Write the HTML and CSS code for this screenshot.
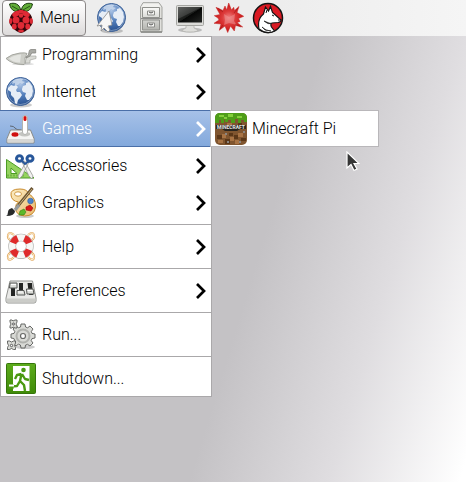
FILE: index.html
```html
<!DOCTYPE html>
<html lang="en">
<head>
<meta charset="utf-8">
<title>Desktop</title>
<link rel="stylesheet" href="styles.css">
</head>
<body>
<svg class="defs" aria-hidden="true">
  <defs>
    <radialGradient id="sea" cx=".5" cy=".25" r=".75"><stop offset="0" stop-color="#a9c2e4"/><stop offset=".5" stop-color="#5480bd"/><stop offset="1" stop-color="#264f8e"/></radialGradient>
    <linearGradient id="metal" x2="0" y2="1"><stop offset="0" stop-color="#fafaf8"/><stop offset="1" stop-color="#b4b5b0"/></linearGradient>
    <linearGradient id="screen" x2="1" y2="1"><stop offset="0" stop-color="#4a4c4a"/><stop offset=".5" stop-color="#191b19"/><stop offset=".52" stop-color="#050605"/><stop offset="1" stop-color="#252725"/></linearGradient>
    <radialGradient id="spike"><stop offset="0" stop-color="#f08080"/><stop offset=".45" stop-color="#dc3a3a"/><stop offset="1" stop-color="#c81414"/></radialGradient>
    <linearGradient id="leaf" x2="0" y2="1"><stop offset="0" stop-color="#5dac1c"/><stop offset="1" stop-color="#3f8a08"/></linearGradient>
    <linearGradient id="pal" x2="1" y2="1"><stop offset="0" stop-color="#fdeec4"/><stop offset="1" stop-color="#e9b96e"/></linearGradient>
    <symbol id="globe" viewBox="0 0 32 32">
      <ellipse cx="16" cy="29" rx="11" ry="2.500" fill="#000" opacity=".2"/>
      <circle cx="15.500" cy="15.500" r="14" fill="url(#sea)" stroke="#3a5f96"/>
      <path d="M8 5l4-2 6 0-1 2 3 1-3 2-2-1-2 2-3 0 0-2-3 1z" fill="#c9d8ec" opacity=".85"/>
      <path d="M3 12l3-3 3 1 2-1 2 2-2 3 1 2 3 0 2 3-2 3-2 2-1 4-2-1-1-5-3-3 0-3-3-2z" fill="#e6edf6"/>
      <path d="M17 13l1-3 3-1 0-2 3-1 3 4 1 5-1 5-3 4-2 0-2-4 1-3-3-1-1-2z" fill="#e6edf6"/>
      <circle cx="15.500" cy="15.500" r="13" fill="none" stroke="#fff" stroke-opacity=".35"/>
    </symbol>
    <symbol id="chevron" viewBox="0 0 12 18"><path d="M2 2l7 7-7 7" fill="none" stroke="currentColor" stroke-width="2.700"/></symbol>
  </defs>
</svg>

<header class="bar">
  <button class="menu-button" type="button" aria-expanded="true" aria-controls="main-menu">
    <svg class="berry" viewBox="0 0 26 32" aria-hidden="true">
      <path d="M12.500 8C8 11 3 9 1.500 2 6 0 12 2 12.500 8zM13.500 8C18 11 23 9 24.500 2 20 0 14 2 13.500 8z" fill="#62ad38" stroke="#1c3d10"/>
      <path d="M4 4l7 4M22 4l-7 4" stroke="#275817" fill="none"/>
      <path d="M8 9Q13 6 18 9 24 12 24 17 26 21 22 25 18 30 13 31 8 30 4 25 0 21 2 17 2 12 8 9z" fill="#350509"/>
      <g fill="#df2a35">
        <ellipse cx="8" cy="12" rx="4" ry="2.500" transform="rotate(-30 8 12)"/><ellipse cx="18" cy="12" rx="4" ry="2.500" transform="rotate(30 18 12)"/><ellipse cx="13" cy="9.500" rx="3" ry="1.800"/>
        <circle cx="8" cy="18" r="3.500"/><circle cx="18" cy="18" r="3.500"/><circle cx="13" cy="13.500" r="2.300"/>
        <ellipse cx="2.700" cy="19" rx="1.500" ry="3"/><ellipse cx="23.300" cy="19" rx="1.500" ry="3"/>
        <circle cx="13" cy="23.500" r="3.400"/><ellipse cx="6.300" cy="24.500" rx="2.400" ry="3"/><ellipse cx="19.700" cy="24.500" rx="2.400" ry="3"/><ellipse cx="13" cy="29" rx="3" ry="1.400"/>
      </g>
    </svg>
    <span>Menu</span>
  </button>
  <nav class="launchers" aria-label="Launchers">
    <button class="launcher" type="button" aria-label="Web browser">
      <svg class="icon" viewBox="0 0 32 32"><use href="#globe"/><path d="M13 9L1 24l5-1-1 6 3-3 4 4 2-2-2-4 4-1z" fill="#f6f6f6" stroke="#8a8a8a" stroke-width=".8"/></svg>
    </button>
    <button class="launcher" type="button" aria-label="File manager">
      <svg class="icon" viewBox="0 0 32 32">
        <path d="M5.500 30V5L8 .7h16L27 5v25z" fill="#e1e1dd" stroke="#a2a39f"/>
        <path d="M6 5L8.500 1.500h15L26 5z" fill="#f2f2ef"/>
        <path d="M7.500 5.500h17v10h-17zM7.500 18h17v10h-17z" fill="url(#metal)" stroke="#90918d"/>
        <path d="M6 16.700h21" stroke="#777"/><path d="M6 30h21" stroke="#858682" stroke-width="1.500"/>
        <path d="M12.500 9h7v4h-7zM12.500 21h7v4h-7z" fill="#f5f5f3" stroke="#8c8d89"/>
        <path d="M14 10q2 2 4 0M14 22q2 2 4 0" fill="none" stroke="#555"/>
      </svg>
    </button>
    <button class="launcher" type="button" aria-label="Terminal">
      <svg class="icon" viewBox="0 0 32 32">
        <ellipse cx="16" cy="28" rx="12" ry="2.500" fill="#bbb"/>
        <path d="M12 23h8v3l4 2q0 2-8 2t-8-2l4-2z" fill="#dededb" stroke="#adada9" stroke-width=".7"/>
        <rect x="2.500" y="3.500" width="27" height="20" rx="1" fill="#dbdbd8" stroke="#a4a5a1"/>
        <path d="M4 5h24v15.500H4z" fill="url(#screen)"/><path d="M4 5h24L4 17z" fill="#fff" opacity=".12"/>
      </svg>
    </button>
    <button class="launcher" type="button" aria-label="Mathematica">
      <svg class="icon" viewBox="0 0 32 32">
        <path d="M15.700 1l2.800 7 2.200-2.700.8 3.200 4.500-4-2 6 6.700 3.800-5.200 2.200 1.500 3-3 1 5.700 4.500-7.200-1.500-1.200 5.500-3.800-5-2.800 6.500L12 24l-5.700 4.300L8 22l-7-.7 5-3.300-1-2-3.700-2.300L7 12.500 3 5.300l7 3.200 2-4.500 1.700 4z" fill="url(#spike)" stroke="#c42020" stroke-width=".5"/>
        <path d="M11 12l5 3 6-3-1 7 3 4-8-2-5 2 1-5z" fill="#ef9292" opacity=".55"/>
        <path d="M10 23l-3 4M22 22l6 3M21 11l4-5M10 10L5 6" stroke="#8e1515" stroke-width=".5"/>
      </svg>
    </button>
    <button class="launcher" type="button" aria-label="Wolfram">
      <svg class="icon" viewBox="0 0 32 32">
        <circle cx="16" cy="16" r="14.500" fill="#da1a23" stroke="#151515" stroke-width="1.500"/>
        <path d="M7 27Q5 17 11.500 12L13.500 5l3 4L18.500 4.500l2 6 3.500 3 5 4.500q0 2-3 2.500l-6 .5q-2 1-.5 4l3 4q-8 4-15.500-2z" fill="#fff" stroke="#151515" stroke-width="1.200"/>
        <path d="M12 19q4 4 8 2.500l-3-.5zM10 25q4 4 9 4l-6-1z" fill="#222" stroke="#222" stroke-width=".7"/>
        <path d="M20 13l2 1M14 11l1-3M26 18h2" stroke="#111" fill="none"/>
      </svg>
    </button>
  </nav>
</header>

<main class="desktop">
  <ul class="menu" id="main-menu">
    <li><button class="item" type="button">
      <svg class="icon" viewBox="0 0 32 32">
        <ellipse cx="18" cy="25" rx="11" ry="1.200" fill="#d5d5d5"/>
        <path d="M22 17h9v2.500l-6 1.500v3h-5z" fill="#dadbd6" stroke="#a8a9a4" stroke-width=".7"/>
        <path d="M1 19.500Q6 15 15 14q6-.5 7 .5-3 4-2 10l-1 1Q7 25.500 1 19.500z" fill="#cdcec8" stroke="#96978f" stroke-width=".8"/>
        <path d="M4 19.500Q9 16 16 15.500l-1 8Q8 23.500 4 19.500z" fill="#e4e5e1"/>
        <path d="M21 18q3-1 3-5 0-2.500 2-2.500h4.700V14h-4q-1 4-5.700 5z" fill="#a9aaa5" stroke="#868781" stroke-width=".8"/>
      </svg><span class="label">Programming</span><svg class="chevron"><use href="#chevron"/></svg></button></li>
    <li><button class="item" type="button">
      <svg class="icon"><use href="#globe"/></svg><span class="label">Internet</span><svg class="chevron"><use href="#chevron"/></svg></button></li>
    <li class="parent"><button class="item selected" type="button" aria-expanded="true">
      <svg class="icon" viewBox="0 0 32 32">
        <path d="M5 13q4 0 5 2t6 2" fill="none" stroke="#5d6673"/>
        <path d="M5.500 17h20l3.500 8.500V30H2v-4.500z" fill="#f4f4f2" stroke="#8a8b87"/>
        <path d="M2.500 26h26v3.500h-26z" fill="#d7d7d4"/>
        <path d="M14 20q5-3 11 0v2q-5 3-11 0z" fill="#c4c5c1"/>
        <rect x="17.500" y="2.500" width="5" height="19" rx="2.500" fill="#fff" stroke="#b2b3af"/>
        <rect x="18.500" y="3" width="3" height="5" rx="1.500" fill="#d60e0e"/>
        <ellipse cx="10" cy="21.500" rx="3.500" ry="2.200" fill="#d01010"/>
      </svg><span class="label">Games</span><svg class="chevron"><use href="#chevron"/></svg></button>
      <ul class="submenu">
        <li><button class="item" type="button">
          <svg class="icon" viewBox="0 0 32 32">
            <rect width="32" height="32" rx="5" fill="#80552f"/>
            <path d="M3 12h4v4H3zM23 10h4v5h-4zM2 22h5v4H2zM10 26h5v5h-5zM19 22h4v4h-4zM26 25h5v3h-5zM14 20h4v3h-4z" fill="#5b3718"/>
            <path d="M7 21h4v4H7zM15 24h4v4h-4zM23 20h5v4h-5zM3 27h5v3H3zM20 27h4v4h-4zM12 10h5v4h-5z" fill="#a87344"/>
            <path d="M10 20h2v2h-2zM24 28h2v2h-2zM12 28h2v2h-2zM28 18h2v2h-2z" fill="#8c8580"/>
            <path d="M0 7V5q0-5 5-5h22q5 0 5 5v4h-3V7h-3v3h-3V6h-3v4h-4V7h-3v2h-3V6H9v4H6V7H4v3H0z" fill="#4e9d18"/>
            <path d="M4 2h5v2H4zM13 1h5v3h-5zM22 3h5v2h-5zM9 4h3v2H9z" fill="#83cf3a"/>
            <path d="M1 12h30v4h-6l-3 2H10l-3-2H1z" fill="#29251f"/>
            <text class="logo-text" x="16" y="16" text-anchor="middle">MINECRAFT</text>
          </svg><span class="label">Minecraft Pi</span></button></li>
      </ul>
    </li>
    <li><button class="item" type="button">
      <svg class="icon" viewBox="0 0 32 32">
        <path d="M1.500 9.500V28H29z" fill="#94d35e" stroke="#4c9c24"/><path d="M6 18v5.500h6z" fill="#fff" stroke="#4c9c24"/><path d="M3 26.500v-2m3 2v-2m3 2v-2m3 2v-2m3 2v-2m3 2v-2" stroke="#39811a" stroke-width=".7"/>
        <path d="M17 12l2.500-1L28 26l-1 3q-4-3-5-7zM24 12l-2.500-1L13 26l1 3q4-3 5-7z" fill="#f0f0ee" stroke="#989995" stroke-width=".8"/>
        <ellipse cx="14.500" cy="8.500" rx="3" ry="2.800" fill="none" stroke="#28579a" stroke-width="3"/><ellipse cx="25" cy="8.500" rx="3" ry="2.800" fill="none" stroke="#28579a" stroke-width="3"/>
        <path d="M17 11l3 3 4-3" fill="none" stroke="#28579a" stroke-width="2"/>
      </svg><span class="label">Accessories</span><svg class="chevron"><use href="#chevron"/></svg></button></li>
    <li><button class="item" type="button">
      <svg class="icon" viewBox="0 0 32 32">
        <ellipse cx="20" cy="29" rx="9" ry="2" fill="#ccc"/>
        <path d="M6 8Q5 2 15 2q7 0 9 5 7 4 6.500 13-1 9-11 9-9-1-9-8 0-4 3-6-7-1-7.500-7z" fill="url(#pal)" stroke="#c98b2c"/>
        <ellipse cx="13" cy="7" rx="3.500" ry="2.200" fill="#fff" stroke="#d09a42"/>
        <circle cx="25.500" cy="14" r="2.800" fill="#4b83ca" stroke="#2b5c9e" stroke-width=".6"/><path d="M21 20l4-2 3 3-2 3-5-1z" fill="#d81818" stroke="#9d0a0a" stroke-width=".6"/><path d="M15 24l4-2 2 3-2 3-5 0z" fill="#5cb92b" stroke="#348012" stroke-width=".6"/>
        <path d="M27.500 1L12 20" stroke="#685332" stroke-width="3"/><path d="M27 2L13 19" stroke="#ccb17c" stroke-width="1"/>
        <path d="M14 18l-4 5" stroke="#969a9b" stroke-width="3.500"/><path d="M7 21l3 3q0 5-9 5 2-1 2-4t4-4z" fill="#282a2a"/>
      </svg><span class="label">Graphics</span><svg class="chevron"><use href="#chevron"/></svg></button></li>
    <li class="group"><button class="item" type="button">
      <svg class="icon" viewBox="0 0 32 32">
        <path d="M9 4Q4 0 3 4T7 10M23 4q5-4 6 0t-4 6M9 26q-5 5-6 1t4-6M23 26q5 5 6 1t-4-6" fill="none" stroke="#e0a65c" stroke-width="2"/><path d="M9 4Q4 0 3 4T7 10M23 4q5-4 6 0t-4 6M9 26q-5 5-6 1t4-6M23 26q5 5 6 1t-4-6" fill="none" stroke="#fff0d2" stroke-width="1"/>
        <circle cx="16" cy="15.300" r="8.800" fill="none" stroke="#aaa9a6" stroke-width="7.700"/>
        <circle cx="16" cy="15.300" r="8.800" fill="none" stroke="#f7f7f5" stroke-width="6.500"/>
        <circle cx="16" cy="15.300" r="8.800" fill="none" stroke="#df2b2b" stroke-width="6.500" pathLength="80" stroke-dasharray="10 10" stroke-dashoffset="-5"/>
      </svg><span class="label">Help</span><svg class="chevron"><use href="#chevron"/></svg></button></li>
    <li class="group"><button class="item" type="button">
      <svg class="icon" viewBox="0 0 32 32">
        <path d="M5 6h22.500L31 23v3q0 2-2 2H3q-2 0-2-2v-3z" fill="#e9e9e7" stroke="#929390"/>
        <path d="M1.500 23.500h29V26q0 1.500-1.500 1.500H3q-1.500 0-1.500-1.500z" fill="#cbccc8"/>
        <path d="M6 8h4v13H6zM14 8h4v11h-4zM22.500 8H27l1 12h-4z" fill="#242524"/>
        <path d="M5 8h7v5H4.500zM12 15.500h7l1 4.500h-8zM21.500 14h6.500l1 5h-7z" fill="#dcddd9" stroke="#555654"/>
        <path d="M6 9.500h5M13 17h5M22.500 15.500h5" stroke="#fff"/>
      </svg><span class="label">Preferences</span><svg class="chevron"><use href="#chevron"/></svg></button></li>
    <li class="group"><button class="item" type="button">
      <svg class="icon" viewBox="0 0 32 32">
        <ellipse cx="20" cy="28" rx="10" ry="2" fill="#ccc"/>
        <g fill="#d9dad6" stroke="#5a5b59" stroke-width=".9">
          <path d="M16 5h4l.6 3 2 .8L25 7l3 3-1.700 2.600.7 1.800 3 .6v4l-3 .6-.8 2L28 24l-3 3-2.500-1.700-2 .8L20 29h-4l-.6-3-2-.8L11 27l-3-3 1.700-2.500-.8-2L6 19v-4l3-.6.8-1.800L8 10l3-3 2.500 1.700 2-.7z"/>
          <path d="M5 1h2l1 1 2-1h2v2l-1 2 1 2v2h-2L8 8 7 9H5V7l1-2-1-2z"/><path d="M2.500 22h2l2 1 2-1h2v2l-1 2.500 1 2v2h-2l-2-1-2 1h-2v-2l1-2-1-2.500z"/>
        </g>
        <circle cx="18" cy="17" r="6.500" fill="none" stroke="#b1b2ae" stroke-width="2"/><circle cx="18" cy="17" r="2.500" fill="#fff" stroke="#686967" stroke-width="1.200"/>
        <circle cx="8.500" cy="5" r="1" fill="#fff" stroke="#555"/><circle cx="6.500" cy="26.500" r="1.200" fill="#fff" stroke="#555"/>
      </svg><span class="label">Run...</span></button></li>
    <li class="group"><button class="item" type="button">
      <svg class="icon" viewBox="0 0 32 32">
        <rect x="1.500" y=".5" width="29" height="30" rx="1" fill="url(#leaf)" stroke="#35750a"/>
        <path d="M8 3h16.500v25H8z" fill="#fff"/>
        <circle cx="18.500" cy="7" r="2.300" fill="#4a9910"/>
        <path d="M16.500 11l-4.500 1-2 4M17 11l3 5 4 1M16.500 11L15 18l4 4 1 6M15 18l-3 5-6 .5" fill="none" stroke="#4a9910" stroke-width="2.400" stroke-linejoin="round"/>
        <path d="M3.500 21h5v5h-5z" fill="#4a9910"/><path d="M4 22.500h5" stroke="#fff" stroke-width="2"/>
      </svg><span class="label">Shutdown...</span></button></li>
  </ul>
  <svg class="pointer" viewBox="0 0 14 22" aria-hidden="true"><path d="M1 1v16l4-3.500 3 6 3-1.500-3-5.500h5z" fill="#353535" stroke="#fff" stroke-width="1.200"/></svg>
</main>
</body>
</html>
```
FILE: styles.css
```css
* {
  box-sizing: border-box;
}

body {
  margin: 0;
  min-height: 100vh;
  display: flex;
  flex-direction: column;
  font: 300 16px/20px Roboto, "Liberation Sans", sans-serif;
  color: #000;
}

ul {
  list-style: none;
  margin: 0;
  padding: 0;
}

button {
  margin: 0;
  padding: 0;
  border: 0;
  background: none;
  font: inherit;
  color: inherit;
}

svg {
  display: block;
  flex: none;
}

.defs {
  position: absolute;
  width: 0;
  height: 0;
}

.icon {
  width: 32px;
  height: 32px;
}

.bar {
  display: flex;
  align-items: center;
  gap: 10px;
  height: 36px;
  padding-left: 2px;
  background: linear-gradient(90deg, #ededed 60%, #f5f5f5);
}

.menu-button {
  display: flex;
  align-items: center;
  gap: 6px;
  height: 36px;
  padding: 0 5px;
  border: 1px solid #8c8888;
  border-radius: 4px;
  background: linear-gradient(#fff, #f0eeee 50%, #dcdada);
}

.berry {
  width: 26px;
  height: 32px;
}

.launchers {
  display: flex;
  gap: 7px;
}

.desktop {
  position: relative;
  flex: 1;
  background: linear-gradient(107deg, #c4c2c5 54%, #dfdde0 77%, #fff 99%);
}

.menu {
  width: 212px;
  background: #fff;
  box-shadow: inset 0 0 0 1px #aaa8aa;
}

.item {
  display: flex;
  align-items: center;
  gap: 5px;
  width: 100%;
  height: 37px;
  padding: 0 5px;
  text-align: left;
}

.label {
  flex: 1;
  white-space: nowrap;
}

.chevron {
  width: 12px;
  height: 18px;
}

.group {
  margin-top: 3px;
  padding-top: 3px;
  border-top: 1px solid #aaa8aa;
}

.parent {
  position: relative;
}

.selected {
  color: #fff;
  background: linear-gradient(#a6c1e8, #83a9dc);
  border: solid #4a6fa8;
  border-width: 1px 0;
}

.submenu {
  position: absolute;
  top: 0;
  left: 210px;
  width: 169px;
  background: #fff;
  box-shadow: inset 0 0 0 1px #b9b7ba;
}

.logo-text {
  font: 700 5px/6px Roboto, sans-serif;
  fill: #e5e5e5;
}

.pointer {
  position: absolute;
  left: 346px;
  top: 115px;
  width: 14px;
  height: 22px;
}
```
